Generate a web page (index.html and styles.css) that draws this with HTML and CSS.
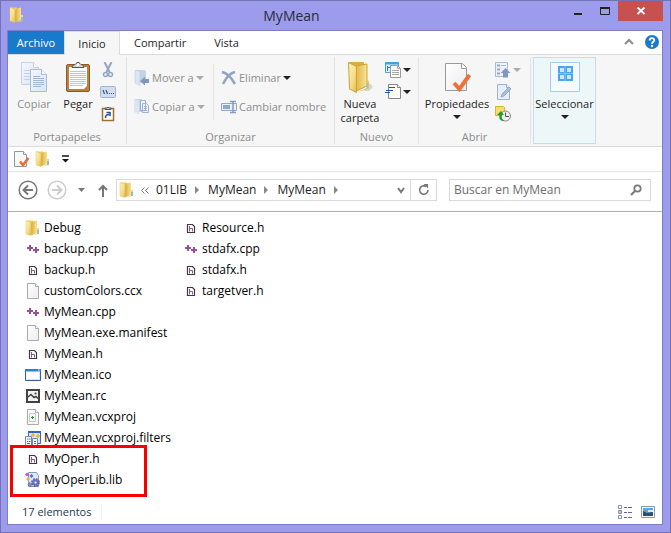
FILE: index.html
```html
<!DOCTYPE html>
<html lang="es">
<head>
<meta charset="utf-8">
<title>MyMean</title>
<link rel="stylesheet" href="styles.css">
</head>
<body>
<svg class="sprite" aria-hidden="true">
  <defs>
    <linearGradient id="gold" x1="0" x2="1" y1="0" y2="1"><stop offset="0" stop-color="#fff4bd"/><stop offset=".55" stop-color="#f6de88"/><stop offset="1" stop-color="#e0b84c"/></linearGradient>
    <linearGradient id="golddark" x1="0" x2="1"><stop offset="0" stop-color="#e0b848"/><stop offset="1" stop-color="#f8e394"/></linearGradient>
    <linearGradient id="paper" x1="0" x2="1" y1="0" y2="1"><stop offset="0" stop-color="#fff"/><stop offset="1" stop-color="#ececf0"/></linearGradient>
    <linearGradient id="bluepaper" x1="0" x2="1" y1="0" y2="1"><stop offset="0" stop-color="#f4f8fe"/><stop offset="1" stop-color="#d9e4f5"/></linearGradient>
  </defs>
  <symbol id="folder" viewBox="0 0 16 16">
    <path d="M1 .5h7v13H1z" fill="#edcc68"/>
    <path d="M7 1.500l5-1v12.500l-5 2z" fill="url(#golddark)"/>
    <path d="M1 .5l5 2v13L1 14z" fill="url(#gold)" stroke="#e6c668" stroke-width=".5"/>
    <path d="M6 3l1.500-1v12L6 15.500z" fill="#dcb24a"/>
    <path d="M12 8h2v6l-7 1.500 5-2z" fill="#f2d67c"/>
    <path d="M13 10v4" stroke="#55b4ea" stroke-width="1.300"/>
  </symbol>
  <symbol id="page" viewBox="0 0 16 16">
    <path d="M2.500.5h8l3 3v12h-11z" fill="url(#paper)" stroke="#aaa"/>
    <path d="M10.500.5v3h3" fill="#fff" stroke="#aaa"/>
  </symbol>
  <symbol id="pagecheck" viewBox="0 0 16 16">
    <path d="M.5.5h9l3 3v12H.5z" fill="#f8f8f8" stroke="#999"/>
    <path d="M9.500.5v3h3" fill="#fff" stroke="#999"/>
    <path d="M6 10.500l3 3.500L14.500 7" fill="none" stroke="#ee6b35" stroke-width="2.600"/>
  </symbol>
  <symbol id="cpp" viewBox="0 0 16 16">
    <path d="M2 7h6M5 4v6M8 9h6M11 6v6" stroke="#9b4f96" stroke-width="2" fill="none"/>
  </symbol>
  <symbol id="header" viewBox="0 0 16 16">
    <path d="M4.500 4.500h5l2 2v6h-7z" fill="#fff" stroke="#3c3c3c" stroke-width="1.200"/>
    <path d="M6.500 6v5.500M6 8.500h3.500v3" stroke="#9b4f96" fill="none"/>
  </symbol>
  <symbol id="winicon" viewBox="0 0 16 16">
    <path d="M.5 2.500h15v11H.5z" fill="#fff" stroke="#2f5f9f"/><path d="M0 2h16v2.500H0z" fill="#347ccc"/>
    <path d="M1.500 12.500h13v-7" stroke="#d9e5f4" fill="none"/><path d="M13 3h1.500" stroke="#fff"/>
  </symbol>
  <symbol id="rc" viewBox="0 0 16 16">
    <path d="M2 2h12v12H2z" fill="#f2f2f2" stroke="#424242" stroke-width="2"/>
    <path d="M3 9l3-2.500L9 9.500l2-1 2 2" fill="none" stroke="#424242" stroke-width="1.500"/><circle cx="10.500" cy="5.500" r="1.100" fill="#424242"/>
  </symbol>
  <symbol id="proj" viewBox="0 0 16 16">
    <path d="M2.500.5h8l3 3v12h-11z" fill="#fafafa" stroke="#aaa"/><path d="M10.500.5v3h3" fill="#fff" stroke="#aaa"/>
    <path d="M4.500 4.500h6v8h-6z" fill="#fff" stroke="#c5cbc5"/><path d="M6 8.500h3M7.500 7v3" stroke="#249a35" stroke-width="1.200"/>
  </symbol>
  <symbol id="filters" viewBox="0 0 16 16">
    <path d="M3.500 1.500h12v12h-12z" fill="#d8e7ff" stroke="#3b6ab2"/><path d="M3 1h13v2H3z" fill="#2f66ba"/>
    <path d="M6 5h4M8 3v4M11 6h4M13 4v4" stroke="#e8b93b" stroke-width="1.500"/>
    <path d="M.5 6.500h6v9h-6zM7.500 8.500h5v7h-5z" fill="#fff" stroke="#7286ae"/>
    <path d="M2 9h1.500M4 9h1.500M2 11.500h1.500M4 11.500h1.500M2 13.500h3M9 11.500h2M9 13.500h2" stroke="#416ba9"/>
  </symbol>
  <symbol id="lib" viewBox="0 0 16 16">
    <path d="M3.500.5h8l2 3v11h-10z" fill="#dfe8fb" stroke="#8896b8"/>
    <path d="M2 .5l2 2-2 2-2-2z" fill="#d64ab7"/><path d="M6.500 2l2 2-2 2-2-2z" fill="#3978d5"/><path d="M3 5l2 2-2 2-2-2z" fill="#e4b92d"/>
    <circle cx="10.500" cy="10.500" r="3.400" fill="none" stroke="#4f579c" stroke-width="2" stroke-dasharray="1.700 .970"/><circle cx="10.500" cy="10.500" r="3" fill="#6870b4"/><circle cx="10.500" cy="10.500" r="1.100" fill="#fff"/>
    <circle cx="5" cy="12.500" r="1.800" fill="#8a91ca" stroke="#5961a6" stroke-dasharray="1 .68"/>
  </symbol>
</svg>

<div class="window">
  <header class="titlebar">
    <svg class="i16 app-icon"><use href="#folder"/></svg>
    <h1>MyMean</h1>
    <div class="controls">
      <button aria-label="Minimizar"><svg width="12" height="12"><path d="M2 9h8" stroke="#222" stroke-width="2"/></svg></button>
      <button aria-label="Maximizar"><svg width="12" height="12"><path d="M1.500 2.500h9v7h-9z" fill="none" stroke="#222"/><path d="M1 3h10" stroke="#222" stroke-width="2"/></svg></button>
      <button class="close" aria-label="Cerrar"><svg width="12" height="12"><path d="M2.500 2.500l7 6.500M9.500 2.500L2.500 9" stroke="#fff" stroke-width="1.800"/></svg></button>
    </div>
  </header>

  <main class="client">
    <nav class="tabs">
      <button class="file">Archivo</button>
      <button class="active">Inicio</button>
      <button class="share">Compartir</button>
      <button>Vista</button>
      <span class="spacer"></span>
      <button class="icon-btn" aria-label="Minimizar la cinta"><svg width="10" height="8"><path d="M1 6l4-4 4 4" fill="none" stroke="#8c8c8c" stroke-width="2"/></svg></button>
      <button class="icon-btn help" aria-label="Ayuda"><svg width="14" height="14"><circle cx="7" cy="7" r="7" fill="#1979ca"/><path d="M4.700 5.500C4.700 2.300 9.300 2.500 9.300 5.200 9.300 6.800 7 6.800 7 8.700" fill="none" stroke="#fff" stroke-width="1.900"/><circle cx="7" cy="11" r="1.200" fill="#fff"/></svg></button>
    </nav>

    <section class="ribbon">
      <div class="group clipboard">
        <div class="tools">
          <button class="big off"><svg width="28" height="32" viewBox="0 0 28 32"><path d="M1.500 .5h12l5 5v17h-17z" fill="url(#bluepaper)" stroke="#c3d2e8"/><path d="M13.500 .5v5h5" fill="#fff" stroke="#c3d2e8"/><path d="M4 8.500h6M4 11.500h6M4 14.500h6M4 17.500h6" stroke="#c6d3e7"/><path d="M10.500 7.500h11l5 5v17h-16z" fill="url(#bluepaper)" stroke="#a9bddb"/><path d="M21.500 7.500v5h5" fill="#fff" stroke="#a9bddb"/><path d="M13 14.500h7M13 16.500h11M13 18.500h11M13 20.500h11M13 22.500h11M13 24.500h8" stroke="#a1b5d5"/></svg><span>Copiar</span></button>
          <button class="big"><svg width="28" height="32" viewBox="0 0 28 32"><rect x="2.500" y="2.500" width="23" height="27" rx="1.500" fill="#b9813c" stroke="#8c5a23"/><path d="M5 5h18v19l-3 3H5z" fill="#fff"/><path d="M6 9.500h16M6 11.500h16M6 13.500h16M6 15.500h16M6 17.500h16M6 19.500h16M6 21.500h16M6 23.500h13" stroke="#b4c9df"/><path d="M8 5.500c0-3 3-2 4-4 1-1.500 3-1.500 4 0 1 2 4 1 4 4z" fill="#d6d6d6" stroke="#555"/><circle cx="14" cy="3" r="1.200" fill="#fff"/></svg><span>Pegar</span></button>
          <div class="minis">
            <button aria-label="Cortar"><svg width="16" height="16"><path d="M4.500 0l5 10M11.500 0l-5 10" stroke="#91a5c5" stroke-width="2"/><circle cx="5.500" cy="12.500" r="2" fill="none" stroke="#91a5c5" stroke-width="1.500"/><circle cx="10.500" cy="12.500" r="2" fill="none" stroke="#91a5c5" stroke-width="1.500"/></svg></button>
            <button aria-label="Copiar ruta de acceso"><svg width="16" height="12"><rect x=".5" y=".5" width="15" height="11" rx="1" fill="#d2dded" stroke="#a0b4d2"/><path d="M3 4l1.500 4M6 4l1.500 4" stroke="#395783" stroke-width="1.200"/><path d="M9 7.500h1M11 7.500h1M13 7.500h1" stroke="#395783"/></svg></button>
            <button aria-label="Pegar acceso directo"><svg width="14" height="16"><rect x="1.500" y="2.500" width="11" height="12" fill="#fff" stroke="#a36d2f" stroke-width="1.500"/><path d="M4 3.500V2h2l1-1 1 1h2v1.500z" fill="#ccc" stroke="#555"/><path d="M4.500 12c0-3 1-3.500 3.500-3.500M5.500 6.500H9V10" stroke="#254f9b" stroke-width="1.600" fill="none"/></svg></button>
          </div>
        </div>
        <h2>Portapapeles</h2>
      </div>

      <div class="group organize">
        <div class="tools">
          <div class="rows first">
            <button class="off"><svg class="i16"><path d="M1 0h9l2 1v12H1z" fill="#c5d3e6"/><path d="M1 0l5 1.500v14L1 13z" fill="#dce6f3" stroke="#b7c7dd" stroke-width=".5"/><path d="M6 11l5-4.500V9h4v4h-4v2.500z" fill="#8198bc"/></svg><span>Mover a</span><i class="arrow"></i></button>
            <button class="off"><svg class="i16"><path d="M0 0h8v13H0z" fill="#c5d3e6"/><path d="M0 0l5 1.500v14L0 13z" fill="#dce6f3"/><path d="M6.500 1.500h5v10h-5zM8.500 4.500h4l2 2v7h-6z" fill="#eef3fb" stroke="#9cb1d0"/><path d="M10 7.500h3M10 9.500h3M10 11.500h3" stroke="#9cb1d0"/></svg><span>Copiar a</span><i class="arrow"></i></button>
          </div>
          <div class="rows">
            <button class="off"><svg class="i16"><path d="M1 2c5 1 9 5 13 12M14 2C9 3 5 8 2 14" stroke="#91a4c3" stroke-width="2.600" fill="none"/></svg><span>Eliminar</span><i class="arrow dark"></i></button>
            <button class="off"><svg class="i16"><path d="M.5 4.500h15v7H.5z" fill="#eaf0f8" stroke="#91a8ca"/><path d="M2 6h7v4H2z" fill="#8fa7ca"/><path d="M9 2.500h6M9 13.500h6M12 3v10" stroke="#839bbf" stroke-width="1.500"/></svg><span>Cambiar nombre</span></button>
          </div>
        </div>
        <h2>Organizar</h2>
      </div>

      <div class="group new">
        <div class="tools">
          <button class="big"><svg width="28" height="32" viewBox="0 0 28 32"><path d="M18 29l6-8 3 4-4 4z" fill="#d5d5d5"/><path d="M3 0h15v25H3z" fill="#dcae40"/><path d="M10 4l11-2v22l-11 5z" fill="url(#golddark)" stroke="#d1a33c"/><path d="M2.500 .5l8 4v26l-7-3.500z" fill="url(#gold)" stroke="#d1a33c"/><path d="M21 18l2 1v8l-12 3 10-4z" fill="#ebc75e"/><path d="M21.500 21v5" stroke="#7cc9ee" stroke-width="1.500"/></svg><span>Nueva<br>carpeta</span></button>
          <div class="minis">
            <button aria-label="Nuevo elemento"><svg class="i16"><path d="M.5.5h13v10H.5z" fill="#d9effc" stroke="#4ba0d5"/><path d="M0 1.500h14" stroke="#4ba0d5" stroke-width="2"/><path d="M2 5.500h3M2.500 4v5" stroke="#3976be"/><path d="M5.500 3.500h7l3 3v9h-10z" fill="#fff" stroke="#999"/><path d="M12.500 3.500v3h3M7 8.500h7M7 10.500h7M7 12.500h7" fill="none" stroke="#aaa"/></svg><i class="arrow dark"></i></button>
            <button aria-label="Fácil acceso"><svg class="i16"><path d="M3.500.5h9l3 3v11h-12z" fill="#fff" stroke="#888"/><path d="M12.500.5v3h3" fill="#fff" stroke="#888"/><path d="M4 3.500h6M1 6.500h7M0 8.500h5" stroke="#2155ad" stroke-width="1.200"/></svg><i class="arrow dark"></i></button>
          </div>
        </div>
        <h2>Nuevo</h2>
      </div>

      <div class="group open">
        <div class="tools">
          <button class="big wide"><svg width="28" height="32" viewBox="0 0 28 32"><path d="M2.500 1.500h17l4 4v23h-21z" fill="url(#paper)" stroke="#999"/><path d="M18.500 1.500v5h5" fill="#fff" stroke="#999"/><path d="M11 21l5.500 6 10-14" fill="none" stroke="#ed7138" stroke-width="4"/></svg><span>Propiedades</span><i class="arrow dark"></i></button>
          <div class="minis">
            <button aria-label="Abrir"><svg class="i16"><path d="M.5.5h12v14H.5z" fill="#edf2f9" stroke="#aabbd4"/><path d="M2 3.500h3M2 7.500h3M2 11.500h3" stroke="#90a7cb" stroke-width="2"/><path d="M6 3.500h5" stroke="#aabbd4"/><path d="M10.500 6l5 5H13v4.500H8V11H5.500z" fill="#8198bc"/></svg><i class="arrow"></i></button>
            <button aria-label="Editar"><svg class="i16"><path d="M2.500.5h9l3 3v12h-12z" fill="#e7eef8" stroke="#9db2d2"/><path d="M11.500.5v3h3" fill="#fff" stroke="#9db2d2"/><path d="M6 13l1-3 7-7 2 2-7 7z" fill="#a9bfdf" stroke="#7d96bd" stroke-width=".7"/></svg></button>
            <button aria-label="Historial"><svg class="i16"><path d="M.5.5h8l1 1v8h-9z" fill="#f6df72" stroke="#d6b43c"/><circle cx="10.500" cy="10" r="5" fill="#eee" stroke="#888"/><path d="M10.500 6.500v4h3.500" stroke="#555" fill="none"/><path d="M9.500 15c-4 0-6-2-5-6H2l4-4 3 4H7c-1 3 0 4 2.500 6z" fill="#229b2b"/></svg></button>
          </div>
        </div>
        <h2>Abrir</h2>
      </div>

      <button class="select-card"><svg width="30" height="30"><path d="M.5.5h29v29H.5z" fill="#f4faff" stroke="#a3ccfb"/><path d="M8 4h15v15H8z" fill="#46a5f5"/><path d="M15 4v15M8 11.500h15" stroke="#7cc2fb"/><path d="M10 6h4v4h-4zM17 6h4v4h-4zM10 13h4v4h-4zM17 13h4v4h-4z" fill="#c9e8ff"/></svg><span>Seleccionar</span><i class="arrow dark"></i></button>
    </section>

    <div class="quick">
      <button aria-label="Propiedades"><svg class="i16"><use href="#pagecheck"/></svg></button>
      <button aria-label="Nueva carpeta"><svg class="i16"><use href="#folder"/></svg></button>
      <button aria-label="Personalizar"><svg width="7" height="8"><path d="M0 1h7" stroke="#111" stroke-width="1.500"/><path d="M0 4h7L3.500 7.500z" fill="#111"/></svg></button>
    </div>

    <div class="navbar">
      <div class="history">
        <button aria-label="Atrás"><svg width="20" height="20"><circle cx="10" cy="10" r="8.800" fill="none" stroke="#777" stroke-width="1.500"/><path d="M15 10H6M10 5.500L5.500 10l4.500 4.500" fill="none" stroke="#777" stroke-width="2"/></svg></button>
        <button aria-label="Adelante"><svg width="20" height="20"><circle cx="10" cy="10" r="8.800" fill="none" stroke="#ccc" stroke-width="1.500"/><path d="M5 10h9M10 5.500l4.500 4.500-4.500 4.500" fill="none" stroke="#ccc" stroke-width="2"/></svg></button>
        <button aria-label="Recientes"><svg width="7" height="4"><path d="M0 0h7L3.500 4z" fill="#777"/></svg></button>
        <button aria-label="Subir"><svg width="10" height="13"><path d="M5 13V2M1 6l4-4 4 4" fill="none" stroke="#777" stroke-width="2"/></svg></button>
      </div>
      <div class="address">
        <svg class="i16"><use href="#folder"/></svg>
        <svg class="prev" width="8" height="7"><path d="M3.500.5l-3 3 3 3M7.500.5l-3 3 3 3" fill="none" stroke="#777"/></svg>
        <a href="#">01LIB</a><i class="chev"></i><a href="#">MyMean</a><i class="chev"></i><a href="#">MyMean</a><i class="chev"></i>
        <button class="drop" aria-label="Ubicaciones anteriores"><svg width="8" height="7"><path d="M1 1l3 4 3-4" fill="none" stroke="#777" stroke-width="2"/></svg></button>
        <button class="reload" aria-label="Actualizar"><svg width="12" height="12"><path d="M8 2.500A4.200 4.200 0 1 0 10 6" fill="none" stroke="#777" stroke-width="1.600"/><path d="M5.500 0H10v4.500z" fill="#777"/></svg></button>
      </div>
      <label class="search">
        <input type="text" aria-label="Buscar" placeholder="Buscar en MyMean">
        <svg width="12" height="12"><circle cx="7.500" cy="4.500" r="3.200" fill="none" stroke="#777" stroke-width="1.700"/><path d="M5 7L1 11" stroke="#777" stroke-width="2"/></svg>
      </label>
    </div>

    <section class="content">
      <ul class="files">
        <li><svg class="i16"><use href="#folder"/></svg><a href="#">Debug</a></li>
        <li><svg class="i16"><use href="#cpp"/></svg><a href="#">backup.cpp</a></li>
        <li><svg class="i16"><use href="#header"/></svg><a href="#">backup.h</a></li>
        <li><svg class="i16"><use href="#page"/></svg><a href="#">customColors.ccx</a></li>
        <li><svg class="i16"><use href="#cpp"/></svg><a href="#">MyMean.cpp</a></li>
        <li><svg class="i16"><use href="#page"/></svg><a href="#">MyMean.exe.manifest</a></li>
        <li><svg class="i16"><use href="#header"/></svg><a href="#">MyMean.h</a></li>
        <li><svg class="i16"><use href="#winicon"/></svg><a href="#">MyMean.ico</a></li>
        <li><svg class="i16"><use href="#rc"/></svg><a href="#">MyMean.rc</a></li>
        <li><svg class="i16"><use href="#proj"/></svg><a href="#">MyMean.vcxproj</a></li>
        <li><svg class="i16"><use href="#filters"/></svg><a href="#">MyMean.vcxproj.filters</a></li>
        <li class="marked"><svg class="i16"><use href="#header"/></svg><a href="#">MyOper.h</a></li>
        <li><svg class="i16"><use href="#lib"/></svg><a href="#">MyOperLib.lib</a></li>
        <li><svg class="i16"><use href="#header"/></svg><a href="#">Resource.h</a></li>
        <li><svg class="i16"><use href="#cpp"/></svg><a href="#">stdafx.cpp</a></li>
        <li><svg class="i16"><use href="#header"/></svg><a href="#">stdafx.h</a></li>
        <li><svg class="i16"><use href="#header"/></svg><a href="#">targetver.h</a></li>
      </ul>
    </section>

    <footer class="status">
      <span class="count">17 elementos</span>
      <button aria-label="Detalles"><svg width="16" height="14"><path d="M1.500.5h3v3h-3zM1.500 5.500h3v3h-3zM1.500 10.500h3v3h-3z" fill="#fff" stroke="#8290a8"/><path d="M7 2.500h3M11 2.500h4M7 7.500h3M11 7.500h4M7 12.500h3M11 12.500h4" stroke="#5c6795"/><path d="M2.500 7h1.500" stroke="#e33"/></svg></button>
      <button aria-label="Iconos grandes"><svg width="14" height="12"><path d="M.5.500h13v11H.5z" fill="#fff" stroke="#8797b5"/><path d="M2 2h10v8H2z" fill="#5ba7e1"/><path d="M2 5l4 2 6-1v4H2z" fill="#24546c"/><path d="M7 4h5v2H7z" fill="#d8ecf8"/></svg></button>
    </footer>
  </main>
</div>
</body>
</html>
```

FILE: styles.css
```css
*, *::after { box-sizing: border-box; }
body {
  margin: 0;
  font: 12px/16px "Open Sans", "Noto Sans", sans-serif;
  color: #1e1e1e;
}
button {
  display: flex;
  align-items: center;
  justify-content: center;
  padding: 0;
  border: 0;
  background: none;
  font: inherit;
  color: inherit;
}
a { color: inherit; text-decoration: none; }
svg { display: block; flex: none; }
h1, h2 { margin: 0; font-weight: 400; }
.sprite { position: absolute; width: 0; height: 0; }
.i16 { width: 16px; height: 16px; }

.window {
  display: flex;
  flex-direction: column;
  min-height: 100vh;
  padding: 0 7px 7px 6px;
  border: 1px solid #7572b4;
  background: #9d9bec;
}

.titlebar { display: flex; height: 29px; }
.app-icon { margin: 6px 0 0 2px; }
.titlebar h1 { flex: 1; padding-right: 6px; font-size: 14px; line-height: 30px; text-align: center; color: #2b2b3d; }
.controls { display: flex; align-items: flex-start; }
.controls button { width: 27px; height: 20px; }
.controls .close { width: 45px; background: #c75050; }

.client {
  display: flex;
  flex: 1;
  flex-direction: column;
  border: 1px solid #807dc4;
  background: #fff;
}

.tabs { display: flex; height: 24px; border-bottom: 1px solid #dadbdc; font-size: 11px; }
.tabs button { padding: 0 12px; height: 24px; }
.tabs .file { width: 56px; height: 23px; background: #1979ca; color: #fff; }
.tabs .active {
  width: 56px;
  border: 1px solid #dadbdc;
  border-bottom: 0;
  background: #f6f6f6;
}
.tabs .share { padding: 0 16px 0 14px; }
.tabs .spacer { flex: 1; }
.tabs .icon-btn { height: 22px; padding: 0 5px; }
.tabs .help { padding: 0 3px 0 6px; }

.ribbon {
  display: flex;
  height: 92px;
  padding: 2px 0;
  border-bottom: 1px solid #dadbdc;
  background: #f6f6f6;
  font-size: 11px;
}
.group {
  display: flex;
  flex: none;
  flex-direction: column;
  border-right: 1px solid #e2e3e4;
}
.group h2 { font-size: 11px; line-height: 14px; text-align: center; color: #8c8c8c; }
.clipboard { width: 119px; }
.organize { width: 208px; }
.new { width: 84px; }
.open { width: 112px; }
.tools { display: flex; flex: 1; padding-top: 5px; }
.big { flex-direction: column; justify-content: flex-start; width: 44px; height: 66px; }
.big span { margin-top: 3px; line-height: 14px; }
.off { color: #8d8d8d; }
.arrow {
  width: 8px;
  border: solid transparent;
  border-width: 4px 4px 0;
  border-top-color: #aaa;
}
.arrow.dark { border-top-color: #222; }
.big .arrow, .select-card .arrow { margin-top: 4px; }
.minis { display: flex; flex-direction: column; gap: 6px; }
.minis button { height: 16px; gap: 2px; justify-content: flex-start; }
.clipboard .tools { padding-left: 4px; }
.clipboard .minis button { justify-content: center; }
.rows { display: flex; flex-direction: column; gap: 13px; height: 56px; margin-top: 2px; padding: 6px 0 0 7px; }
.rows.first { width: 87px; border-right: 1px solid #e2e3e4; }
.rows button { height: 16px; justify-content: flex-start; gap: 2px; white-space: nowrap; }
.new .tools { padding-left: 3px; }
.new .minis { padding-left: 3px; }
.open .tools { padding-left: 2px; }
.open .big { width: 72px; }
.open .minis { padding-left: 2px; }
.select-card {
  flex: none;
  flex-direction: column;
  justify-content: flex-start;
  width: 63px;
  margin-left: 2px;
  padding-top: 4px;
  border: 1px solid #c6dcef;
  background: #eef7f8;
}
.select-card span { margin-top: 5px; line-height: 14px; }

.quick {
  display: flex;
  align-items: center;
  gap: 5px;
  height: 25px;
  padding-left: 6px;
  border-bottom: 1px solid #e5e5e5;
}
.quick button:last-child { margin-left: 6px; }

.navbar {
  display: flex;
  align-items: center;
  height: 40px;
  padding: 0 11px 3px 10px;
  border-bottom: 1px solid #b0b0b0;
}
.history { display: flex; align-items: center; gap: 9px; width: 98px; }
.history button:nth-child(4) { margin-left: 4px; }
.history button:nth-child(3) { margin-left: 2px; }
.address {
  display: flex;
  flex: 1;
  align-items: center;
  height: 22px;
  padding-left: 2px;
  border: 1px solid #d9d9d9;
}
.address .prev { margin: 0 7px 0 6px; }
.chev {
  margin: 0 9px 0 8px;
  border: solid transparent;
  border-width: 4px 0 4px 4px;
  border-left-color: #888;
}
.address button { height: 20px; }
.address .drop { width: 18px; margin-left: auto; }
.address .reload { width: 26px; border-left: 1px solid #d9d9d9; }
.search {
  display: flex;
  flex: none;
  align-items: center;
  width: 202px;
  height: 22px;
  margin-left: 12px;
  padding: 0 8px 0 4px;
  border: 1px solid #d9d9d9;
}
.search input {
  flex: 1;
  min-width: 0;
  padding: 0;
  border: 0;
  outline: 0;
  background: none;
  font: inherit;
}
.search input::placeholder { color: #6d6d6d; opacity: 1; }

.content { flex: 1; padding: 5px 17px 0; }
.files {
  display: grid;
  grid-template-rows: repeat(13, 21px);
  grid-auto-columns: 158px;
  grid-auto-flow: column;
  margin: 0;
  padding: 0;
  list-style: none;
  color: #000;
}
.files li { display: flex; align-items: center; gap: 3px; white-space: nowrap; }
.marked { position: relative; }
.marked::after {
  content: "";
  position: absolute;
  top: -3px;
  left: -15px;
  width: 137px;
  height: 52px;
  border: 3px solid #f80000;
}

.status { display: flex; align-items: center; height: 24px; padding: 0 7px 0 14px; gap: 8px; color: #1e395b; }
.status .count { margin-right: auto; padding-right: 10px; border-right: 1px solid #f0f0f0; font-size: 11px; }
```
